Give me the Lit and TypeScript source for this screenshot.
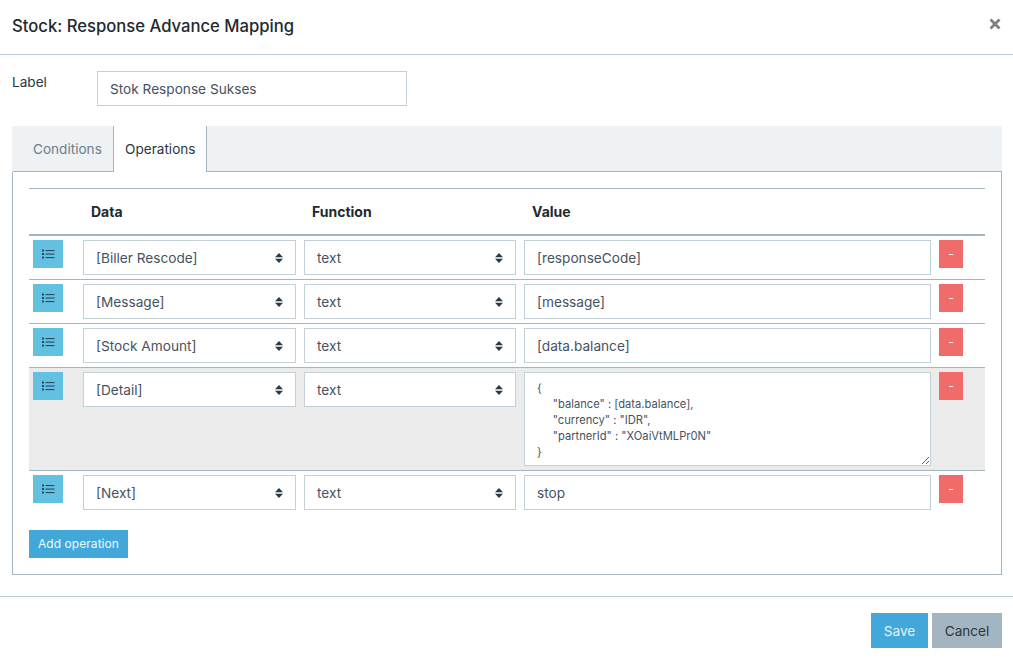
import { LitElement, html, css, svg } from "lit";
import { customElement } from "lit/decorators.js";

const ROWS = [
  { data: "[Biller Rescode]", value: "[responseCode]" },
  { data: "[Message]", value: "[message]" },
  { data: "[Stock Amount]", value: "[data.balance]" },
  { data: "[Detail]", value: '{\n     "balance" : [data.balance],\n     "currency" : "IDR",\n     "partnerId" : "XOaiVtMLPr0N"\n}', area: true },
  { data: "[Next]", value: "stop" },
];

const ARROWS = svg`<path d="M4 0 L8 4.3 H0 Z M4 10 L8 5.7 H0 Z" fill="#2c3a45"/>`;
const LIST = svg`<g fill="#2a4a5c"><rect x="0" y="0.5" width="2" height="2"/><rect x="0" y="4" width="2" height="2"/><rect x="0" y="7.5" width="2" height="2"/><rect x="3.5" y="1" width="9" height="1.1"/><rect x="3.5" y="4.5" width="9" height="1.1"/><rect x="3.5" y="8" width="9" height="1.1"/></g>`;

@customElement("app-root")
export class AppRoot extends LitElement {
  static styles = css`
    :host { display: block; width: 1013px; height: 665px; background: #fff; font-family: Inter, "Liberation Sans", sans-serif; font-size: 13.6px; color: #2b3640; overflow: hidden; }
    * { box-sizing: border-box; }
    .header { height: 55px; border-bottom: 1px solid #bfcfd6; display: flex; align-items: center; justify-content: space-between; padding: 0 12px 3px; }
    .title { font-size: 16.65px; font-weight: 500; color: #22292f; }
    .close { width: 12px; height: 12px; margin-bottom: 3px; }
    .body { padding: 16px 11px 0 12px; }
    .label-row { display: flex; align-items: flex-start; gap: 0; }
    .label { width: 85px; padding-top: 3px; line-height: 17px; color: #2b3640; }
    input, select, textarea { font-family: inherit; font-size: 13.65px; color: #46535f; background: #fff; border: 1px solid #c2d0d8; border-radius: 0; outline: none; margin: 0; }
    .name { width: 310px; height: 35px; padding: 0 12px; }
    .tabs { margin-top: 20px; height: 46px; background: #eef2f5; display: flex; padding-left: 1px; }
    .tab { height: 46px; padding: 15px 10px 0 20px; color: #6d7c88; line-height: 17px; border-bottom: 1px solid #a4b5c0; width: 100px; white-space: nowrap; }
    .tab.active { background: #fff; color: #2b3640; border: 1px solid #a4b5c0; border-bottom: 0; border-top: 0; width: 94px; padding-left: 11px; }
    .tabfill { flex: 1; border-bottom: 1px solid #a4b5c0; }
    .panel { border: 1px solid #a4b5c0; border-top: 0; height: 403px; padding: 16px 16px 0; }
    .grid-row { display: grid; grid-template-columns: 50px 221px 220px 415px 1fr; }
    .head { height: 48px; border-top: 1px solid #a4b5c0; border-bottom: 2px solid #a4b5c0; font-size: 14px; font-weight: 700; align-items: center; color: #22292f; }
    .head div { padding-left: 12px; }
    .row { border-bottom: 1px solid #a4b5c0; }
    .row:last-of-type { border-bottom: 0; }
    .row.hl { background: #ebebeb; }
    .cell { padding: 4px; position: relative; }
    .drag { width: 30px; height: 28px; background: #62c0e0; border: 0; padding: 0 0 1px; display: flex; align-items: center; justify-content: center; }
    .drag svg { width: 13px; height: 10px; }
    select, .txt { width: 100%; height: 35px; padding: 0 12px; appearance: none; display: block; }
    .arrows { position: absolute; right: 17px; top: 17px; width: 8px; height: 10px; pointer-events: none; }
    textarea { display: block; width: 100%; height: 94px; padding: 7px 12px; font-size: 11.2px; line-height: 16px; white-space: pre; overflow: hidden; }
    .rm { width: 24px; height: 28px; background: #f16b6b; color: #fff; border: 0; padding: 0 0 2px; font-family: inherit; font-size: 12px; }
    .add { display: block; margin-top: 16px; width: 99px; height: 28px; background: #41a8d9; color: #f1f9fd; border: 0; padding: 0 0 1px; font-family: inherit; font-size: 12px; letter-spacing: 0.05px; }
    .footer { margin-top: 21px; height: 69px; border-top: 1px solid #bfcfd6; padding: 16px 11px 0 0; display: flex; justify-content: flex-end; gap: 4px; }
    .footer button { height: 35px; border: 0; padding: 0; font-family: inherit; font-size: 13.6px; }
    .save { width: 57px; background: #41a8d9; color: #e3f3fb; }
    .cancel { width: 70px; background: #a3b5c0; color: #2b3640; }
  `;

  render() {
    return html`
      <div class="header">
        <div class="title">Stock: Response Advance Mapping</div>
        <svg class="close" viewBox="0 0 12 12"><path d="M1.5 1.5 L10.5 10.5 M10.5 1.5 L1.5 10.5" stroke="#808080" stroke-width="2.8"/></svg>
      </div>
      <div class="body">
        <div class="label-row">
          <div class="label">Label</div>
          <input class="name" .value=${"Stok Response Sukses"} />
        </div>
        <div class="tabs">
          <div class="tab">Conditions</div>
          <div class="tab active">Operations</div>
          <div class="tabfill"></div>
        </div>
        <div class="panel">
          <div class="grid-row head">
            <div></div><div>Data</div><div>Function</div><div>Value</div><div></div>
          </div>
          ${ROWS.map((r) => html`
            <div class="grid-row row ${r.area ? "hl" : ""}">
              <div class="cell"><button class="drag"><svg viewBox="0 0 13 10">${LIST}</svg></button></div>
              <div class="cell">
                <select><option>${r.data}</option></select>
                <svg class="arrows" viewBox="0 0 8 10">${ARROWS}</svg>
              </div>
              <div class="cell">
                <select><option>text</option></select>
                <svg class="arrows" viewBox="0 0 8 10">${ARROWS}</svg>
              </div>
              <div class="cell">
                ${r.area
                  ? html`<textarea .value=${r.value}></textarea>`
                  : html`<input class="txt" .value=${r.value} />`}
              </div>
              <div class="cell"><button class="rm">-</button></div>
            </div>
          `)}
          <button class="add">Add operation</button>
        </div>
      </div>
      <div class="footer">
        <button class="save">Save</button>
        <button class="cancel">Cancel</button>
      </div>
    `;
  }
}
